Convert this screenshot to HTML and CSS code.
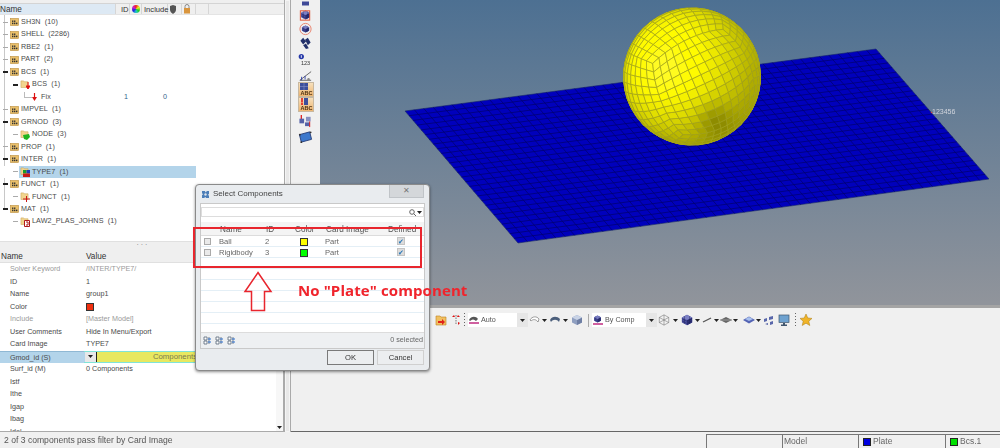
FILE: index.html
```html
<!DOCTYPE html>
<html lang="en">
<head>
<meta charset="utf-8">
<title>Select Components</title>
<link rel="stylesheet" href="styles.css">
</head>
<body>
<svg class="defs" width="0" height="0" aria-hidden="true">
  <defs>
    <symbol id="i-group" viewBox="0 0 9 8"><rect x=".5" y=".5" width="8" height="7" fill="#eac06a" stroke="#b98c3a" stroke-width=".6"/><rect x="2" y="2.5" width="1.4" height="1.4" fill="#333"/><rect x="4" y="2.5" width="1.4" height="1.4" fill="#333"/><rect x="2" y="4.6" width="1.4" height="1.6" fill="#333"/><rect x="4" y="4.6" width="1.4" height="1.6" fill="#333"/><rect x="6" y="4.6" width="1.4" height="1.6" fill="#333"/></symbol>
    <symbol id="i-folder" viewBox="0 0 9 9"><path d="M.5 1h3l1 1h4v6.5H.5z" fill="#f2d58e" stroke="#c9a253" stroke-width=".6"/></symbol>
    <symbol id="i-cube" viewBox="0 0 14 14"><path d="M7 1l6 3v6l-6 3-6-3V4z" fill="#4a4fa0"/><path d="M7 7l6-3v6l-6 3z" fill="#2e3278"/><path d="M7 1l6 3-6 3-6-3z" fill="#7c80c4"/><path d="M1 5.500l6 3 6-3M1 8l6 3 6-3M4 2.500v9M10 2.500v9" fill="none" stroke="#1c1f55" stroke-width=".5"/></symbol>
    <symbol id="i-caret" viewBox="0 0 5 3"><path d="M0 0h5L2.500 3z" fill="#222"/></symbol>
    <symbol id="i-grid" viewBox="0 0 9 9"><path d="M1 1h3v3H1zM1 5h3v3H1z" fill="#fff" stroke="#567" stroke-width=".8"/><path d="M6 1v7" stroke="#567" stroke-width=".8"/><path d="M5 3h3M5 6h3" stroke="#2a6fd0" stroke-width="1"/></symbol>
  </defs>
</svg>

<div class="app">
  <div class="main">
    <aside class="left">
      <div class="strip"></div>
      <div class="thead">
        <span class="th th-name">Name</span>
        <span class="th th-id">ID</span>
        <span class="th th-col"><i class="wheel"></i></span>
        <span class="th th-inc">Include</span>
        <span class="th th-ic"><svg width="8" height="9" viewBox="0 0 8 9"><path d="M1 1l3-1 3 1v4c0 2-2 3-3 4-1-1-3-2-3-4z" fill="#555"/></svg></span>
        <span class="th th-ic"><svg width="8" height="10" viewBox="0 0 8 10"><path d="M2 4V2.500a2 2 0 0 1 4 0V4" fill="none" stroke="#888"/><rect x="1" y="4" width="6" height="5.500" fill="#d9953d"/></svg></span>
        <span class="th th-rest"></span>
      </div>
      <div class="tree">
        <div class="row"><span class="exp"></span><svg class="ic"><use href="#i-group"/></svg><span class="lbl">SH3N  (10)</span></div>
        <div class="row"><span class="exp"></span><svg class="ic"><use href="#i-group"/></svg><span class="lbl">SHELL  (2286)</span></div>
        <div class="row"><span class="exp"></span><svg class="ic"><use href="#i-group"/></svg><span class="lbl">RBE2  (1)</span></div>
        <div class="row"><span class="exp"></span><svg class="ic"><use href="#i-group"/></svg><span class="lbl">PART  (2)</span></div>
        <div class="row"><span class="exp open"></span><svg class="ic"><use href="#i-group"/></svg><span class="lbl">BCS  (1)</span></div>
        <div class="row l1"><span class="exp open"></span><span class="stack"><svg class="ic"><use href="#i-folder"/></svg><svg class="badge" width="4" height="8" viewBox="0 0 4 8"><path d="M2 0v5M0 4l2 3 2-3z" stroke="#d11" fill="#d11"/></svg></span><span class="lbl">BCS  (1)</span></div>
        <div class="row l2"><span class="elbow"></span><svg class="arrow" width="5" height="9" viewBox="0 0 5 9"><path d="M2.500 0v5" stroke="#d11" stroke-width="1.200"/><path d="M0 4l2.500 4L5 4z" fill="#d11"/></svg><span class="lbl lbl-fix">Fix</span><span class="num n-id">1</span><span class="num n-inc">0</span></div>
        <div class="row"><span class="exp"></span><svg class="ic"><use href="#i-group"/></svg><span class="lbl">IMPVEL  (1)</span></div>
        <div class="row"><span class="exp open"></span><svg class="ic"><use href="#i-group"/></svg><span class="lbl">GRNOD  (3)</span></div>
        <div class="row l1"><span class="exp"></span><span class="stack"><svg class="ic"><use href="#i-folder"/></svg><svg class="badge" width="7" height="6" viewBox="0 0 7 6"><path d="M0 1l6-1 1 3-3 3-3-1z" fill="#1fb51f"/></svg></span><span class="lbl">NODE  (3)</span></div>
        <div class="row"><span class="exp"></span><svg class="ic"><use href="#i-group"/></svg><span class="lbl">PROP  (1)</span></div>
        <div class="row"><span class="exp open"></span><svg class="ic"><use href="#i-group"/></svg><span class="lbl">INTER  (1)</span></div>
        <div class="row l1 sel"><span class="exp"></span><span class="stack"><svg class="ic"><use href="#i-folder"/></svg><svg class="badge" width="7" height="7" viewBox="0 0 7 7"><rect width="3.500" height="3.500" fill="#1c9c2a"/><rect x="3.500" width="3.500" height="3.500" fill="#1e3cb4"/><rect y="3.500" width="7" height="3.500" fill="#c81818"/></svg></span><span class="lbl">TYPE7  (1)</span></div>
        <div class="row"><span class="exp open"></span><svg class="ic"><use href="#i-group"/></svg><span class="lbl">FUNCT  (1)</span></div>
        <div class="row l1"><span class="exp"></span><span class="stack"><svg class="ic"><use href="#i-folder"/></svg><svg class="badge" width="7" height="6" viewBox="0 0 7 6"><path d="M3.500 0v6M0 3h7" stroke="#c81818"/></svg></span><span class="lbl">FUNCT  (1)</span></div>
        <div class="row"><span class="exp open"></span><svg class="ic"><use href="#i-group"/></svg><span class="lbl">MAT  (1)</span></div>
        <div class="row l1"><span class="exp"></span><span class="stack"><svg class="ic"><use href="#i-folder"/></svg><svg class="badge" width="6" height="7" viewBox="0 0 6 7"><path d="M.5.500h5v6h-5zM2 2h2v3H2" fill="#fff" stroke="#b01818"/></svg></span><span class="lbl">LAW2_PLAS_JOHNS  (1)</span></div>
      </div>
      <div class="hsplit">· · ·</div>
      <div class="phead"><span>Name</span><span>Value</span></div>
      <div class="props">
        <div class="prow dim"><span>Solver Keyword</span><span>/INTER/TYPE7/</span></div>
        <div class="prow"><span>ID</span><span>1</span></div>
        <div class="prow"><span>Name</span><span>group1</span></div>
        <div class="prow"><span>Color</span><span><i class="swatch swatch-red"></i></span></div>
        <div class="prow dim"><span>Include</span><span>[Master Model]</span></div>
        <div class="prow"><span>User Comments</span><span>Hide In Menu/Export</span></div>
        <div class="prow"><span>Card Image</span><span>TYPE7</span></div>
        <div class="prow active"><span>Gmod_id (S)</span><span class="picker"><i class="pick-btn"><svg width="5" height="3"><use href="#i-caret"/></svg></i><i class="pick-val">Components</i></span></div>
        <div class="prow"><span>Surf_id (M)</span><span>0 Components</span></div>
        <div class="prow"><span>Istf</span><span></span></div>
        <div class="prow"><span>Ithe</span><span></span></div>
        <div class="prow"><span>Igap</span><span></span></div>
        <div class="prow"><span>Ibag</span><span></span></div>
        <div class="prow prow-cut"><span>Idel</span><span></span></div>
        <div class="pscroll"><svg width="5" height="3"><use href="#i-caret"/></svg></div>
      </div>
    </aside>
    <div class="vsplit"></div>
    <div class="rightside">
      <nav class="vbar">
        <svg class="vt h5" viewBox="0 0 15 5"><path d="M4 0h7v4H4z" fill="#3f4a98"/></svg>
        <svg class="vt" viewBox="0 0 15 15"><use href="#i-cube" x="2" y="2" width="11" height="11"/><rect x="2" y="3" width="10" height="10" fill="none" stroke="#e25a3a" stroke-width="1.100"/></svg>
        <svg class="vt" viewBox="0 0 15 15"><use href="#i-cube" x="3" y="3" width="9" height="9"/><circle cx="7.500" cy="7.500" r="6" fill="none" stroke="#e8806a"/></svg>
        <svg class="vt" viewBox="0 0 15 15"><path d="M2 5l3-3 3 4-3 3zM7 4l3-2 3 5-3 3zM5 10l3-2 3 5-3 1z" fill="#22306a"/></svg>
        <svg class="vt h8" viewBox="0 0 15 8"><circle cx="5" cy="4" r="3" fill="#2638a8"/><path d="M5 2.500v3" stroke="#fff"/></svg>
        <span class="vt-num">123</span>
        <svg class="vt vt-ramp" viewBox="0 0 15 15"><path d="M1 13L14 3M1 13h13" stroke="#555" fill="none"/><path d="M3 9v4M7 8v4" stroke="#2638a8"/><circle cx="11" cy="12" r="1.500" fill="#888"/></svg>
        <div class="vt-abc"><svg width="8" height="7" viewBox="0 0 8 7"><rect width="8" height="7" fill="#3c4f9c"/><path d="M0 3.500h8M4 0v7" stroke="#8892c8" stroke-width=".6"/></svg><b>ABC</b></div>
        <div class="vt-abc"><svg width="8" height="7" viewBox="0 0 8 7"><path d="M2 0v4.500" stroke="#d11" stroke-width="1.500"/><circle cx="2" cy="6" r="1" fill="#d11"/><rect x="4" width="4" height="7" fill="#3c4f9c"/></svg><b>ABC</b></div>
        <svg class="vt vt-gap" viewBox="0 0 15 15"><path d="M3 1v5" stroke="#d11" stroke-width="1.300"/><rect x="1" y="5" width="5" height="5" fill="#5562a8"/><rect x="8" y="3" width="5" height="5" fill="#8890c0"/><rect x="7" y="9" width="5" height="4" fill="#5562a8"/><path d="M12 8v6" stroke="#d11"/></svg>
        <svg class="vt vt-gap" viewBox="0 0 15 15"><path d="M1 5l11-3 2 8-11 3z" fill="#3d78cc" stroke="#29407a"/><circle cx="1.500" cy="5" r="1" fill="#333"/><circle cx="13" cy="2.500" r="1" fill="#333"/><circle cx="3" cy="13" r="1" fill="#333"/></svg>
      </nav>
      <section class="work">
        <div class="view">
          <svg class="scene" id="scene" width="680" height="305" viewBox="320 0 680 305">
            <defs><clipPath id="ball"><circle cx="692" cy="76.500" r="69"/></clipPath></defs>
            <polygon points="405,111 876,49 989,179 518,243" fill="#0000bc" stroke="#1a2a66" stroke-width=".6"/>
            <g id="plate-lines" class="plate-lines"></g>
            <g id="ball-cells" clip-path="url(#ball)"></g>
            <circle cx="931.500" cy="112.500" r=".8" fill="#d04040"/>
            <text x="932" y="113.500" class="triad">123456</text>
          </svg>
        </div>
        <div class="tools">
          <svg class="ti m0" viewBox="0 0 12 12"><path d="M1 2h4l1 1h5v8H1z" fill="#f0c060" stroke="#c08020" stroke-width=".6"/><path d="M3 7h4V5l3 3-3 3V9H3z" fill="#e0201a"/></svg>
          <svg class="ti ti-s m5" viewBox="0 0 8 12"><path d="M4 1v10" stroke="#777" stroke-dasharray="1.500 1"/><path d="M0 3l2-2 1 2zM8 3L6 1 5 3z" fill="#d11"/><path d="M6 8l2 1-2 2z" fill="#d11"/></svg>
          <i class="dots m4"></i>
          <div class="combo c-auto m3"><svg class="ci" viewBox="0 0 10 10"><path d="M0 5c2-4 7-4 9-1l-2 2C5 4 3 4 1 6z" fill="#555"/><path d="M0 8h10" stroke="#d060a0" stroke-width="2"/></svg><span>Auto</span></div><span class="cbtn"><svg width="5" height="3"><use href="#i-caret"/></svg></span>
          <svg class="ti m1" viewBox="0 0 12 12"><path d="M1 6c2-4 7-4 9-1l-1 3C7 5 4 5 2 7z" fill="#fff" stroke="#777" stroke-width=".7"/></svg>
          <svg class="car m1"><use href="#i-caret"/></svg>
          <svg class="ti m2" viewBox="0 0 12 12"><path d="M1 6c2-4 7-4 10-1l-1 3C8 5 4 5 2 8z" fill="#4c5f7c"/></svg>
          <svg class="car m2"><use href="#i-caret"/></svg>
          <svg class="ti m3" viewBox="0 0 12 12"><path d="M6 1l5 2.500v5L6 11 1 8.500v-5z" fill="#8f9fc0"/><path d="M6 6l5-2.500v5L6 11z" fill="#6f7fa4"/><path d="M6 1l5 2.500L6 6 1 3.500z" fill="#c9d3e6"/></svg>
          <i class="sep"></i>
          <div class="combo c-comp"><svg class="ci" viewBox="0 0 10 10"><use href="#i-cube" width="9" height="8"/><path d="M0 9h10" stroke="#d060a0" stroke-width="2"/></svg><span>By Comp</span></div><span class="cbtn"><svg width="5" height="3"><use href="#i-caret"/></svg></span>
          <svg class="ti m1" viewBox="0 0 14 14"><path d="M7 1l5.500 3v6L7 13l-5.500-3V4zM7 1v12M1.500 4L12.500 10M12.500 4L1.500 10" fill="#f2f2f2" stroke="#666" stroke-width=".6"/></svg>
          <svg class="car m3"><use href="#i-caret"/></svg>
          <svg class="ti m3"><use href="#i-cube"/></svg>
          <svg class="car m2"><use href="#i-caret"/></svg>
          <svg class="ti-l m2" viewBox="0 0 10 8"><path d="M1 6l8-4" stroke="#555" stroke-width="1.300"/></svg>
          <svg class="car m2"><use href="#i-caret"/></svg>
          <svg class="ti m1" viewBox="0 0 12 12"><path d="M0 6l6-3 6 3-6 3z" fill="#666"/><path d="M0 6h12" stroke="#999"/></svg>
          <svg class="car m1"><use href="#i-caret"/></svg>
          <svg class="ti m5" viewBox="0 0 12 12"><path d="M0 6l6-3.500L12 6 6 9.500z" fill="#5464b4"/><path d="M2 5l4-2 4 2-4 2z" fill="#a8c0ee"/></svg>
          <svg class="car m1"><use href="#i-caret"/></svg>
          <svg class="ti m2" viewBox="0 0 12 12"><path d="M1 5l3-1v3L1 8zM6 3l4-1v3L6 6zM2 10l3-1v2zM7 8l3-1v3l-3 1z" fill="#5866aa"/></svg>
          <svg class="ti m3" viewBox="0 0 12 12"><rect x="1" y="1" width="10" height="7.500" fill="#6ea2d0" stroke="#40566e" stroke-width=".7"/><path d="M5 9h2v1.500h2V12H3v-1.500h2z" fill="#40566e"/></svg>
          <i class="dots m5"></i>
          <svg class="ti m4" viewBox="0 0 12 12"><path d="M6 0l1.800 4 4.200.400-3.200 2.800 1 4.300L6 9.200 2.200 11.500l1-4.300L0 4.400 4.200 4z" fill="#f0b428" stroke="#a87a10" stroke-width=".5"/></svg>
        </div>
      </section>
    </div>
  </div>
  <footer class="status">
    <span class="st-msg">2 of 3 components pass filter by Card Image</span>
    <span class="cell c1"></span>
    <span class="cell c2">Model</span>
    <span class="cell c3"><i class="sq sq-blue"></i>Plate</span>
    <span class="cell c4"><i class="sq sq-green"></i>Bcs.1</span>
  </footer>
</div>

<div class="dialog">
  <div class="dtitle">
    <svg width="9" height="9" viewBox="0 0 9 9"><path d="M1 1h3l.5 1.500L6 1h2v3L7 4.500 8 6v2H5L4.500 7 3 8H1V5l1-.5L1 3z" fill="#4d7fb8"/><circle cx="4.500" cy="4.500" r="1.200" fill="#dfe4e9"/></svg>
    <span>Select Components</span>
    <span class="dclose">✕</span>
  </div>
  <div class="dbody">
    <div class="dsearch"><svg width="7" height="7" viewBox="0 0 7 7"><circle cx="3" cy="3" r="2.300" fill="none" stroke="#666"/><path d="M4.600 4.600L7 7" stroke="#666"/></svg><svg width="5" height="3"><use href="#i-caret"/></svg></div>
    <div class="dhead"><span class="dc-n">Name</span><span class="dc-i">ID</span><span class="dc-c">Color</span><span class="dc-p">Card Image</span><span class="dc-d">Defined</span></div>
    <div class="drow"><i class="cb"></i><span class="dn">Ball</span><span class="di">2</span><i class="swatch-d s-y"></i><span class="dp">Part</span><i class="chk">✔</i></div>
    <div class="drow"><i class="cb"></i><span class="dn">Rigidbody</span><span class="di">3</span><i class="swatch-d s-g"></i><span class="dp">Part</span><i class="chk">✔</i></div>
    <div class="dempty"></div>
    <div class="dfoot">
      <svg width="9" height="9"><use href="#i-grid"/></svg>
      <svg width="9" height="9"><use href="#i-grid"/></svg>
      <svg width="9" height="9"><use href="#i-grid"/></svg>
      <span class="dcount">0 selected</span>
    </div>
  </div>
  <div class="dbtns"><button class="btn btn-ok">OK</button><button class="btn">Cancel</button></div>
</div>

<div class="redbox"></div>
<svg class="redarrow" width="30" height="41" viewBox="0 0 30 41"><path d="M15 1.500L28 20.500H21.500V39.500H8.500V20.500H2z" fill="none" stroke="#e8262e" stroke-width="1.500"/></svg>
<div class="note">No "Plate" component</div>

<script src="mesh.js"></script>
</body>
</html>
```
FILE: styles.css
```css
* { box-sizing: border-box; }
html, body { margin: 0; padding: 0; }
body {
  width: 1000px; height: 448px; overflow: hidden; position: relative;
  background: #f0f0f0; color: #4a4a4a;
  font: 7.2px/12.5px "Liberation Sans", Arial, sans-serif;
}
i { font-style: normal; }
.defs { position: absolute; }
.app { display: flex; flex-direction: column; height: 448px; overflow: hidden; filter: blur(.3px); }
.main { display: flex; height: 432px; flex: none; }

/* left column */
.left { width: 284px; display: flex; flex-direction: column; background: #fff; flex: none; }
.strip { height: 4px; background: #efefef; border-bottom: 1px solid #d4d4d4; flex: none; }
.thead { height: 11px; display: flex; flex: none; background: #efefef; line-height: 11px; color: #333; border-bottom: 1px solid #e4e4e4; font-size: 7.6px; }
.th { border-right: 1px solid #d6d6d6; display: flex; align-items: center; }
.th-name { width: 116px; background: #dde9f4; font-size: 8.2px; }
.th-id { width: 14px; padding-left: 5px; }
.th-col { width: 12px; justify-content: center; }
.th-inc { width: 26px; padding-left: 2px; }
.th-ic { width: 14px; padding-left: 1px; }
.th-rest { flex: 0 0 13px; }
.wheel { width: 8px; height: 8px; border-radius: 50%; background: conic-gradient(#e22, #ee2, #2c2, #2cc, #22d, #c2c, #e22); }

.tree {
  height: 226px; flex: none; padding-top: 1px;
  background: linear-gradient(#c8c8c8, #c8c8c8) 4px 0 / 1px 194px no-repeat;
}
.row { height: 12.47px; display: flex; align-items: center; position: relative; width: 196px; }
.exp { width: 5px; height: 1px; margin-left: 3px; margin-right: 2px; background: #aaa; flex: none; }
.exp.open { background: #222; height: 2px; }
.ic { width: 9px; height: 8px; flex: none; }
.lbl { margin-left: 2px; letter-spacing: .1px; white-space: pre; }
.l1 { padding-left: 10px; }
.l1 .lbl { margin-left: 1px; }
.stack { position: relative; width: 11px; height: 9px; display: flex; flex: none; }
.badge { position: absolute; right: 1px; bottom: -1px; }
.l2 { padding-left: 24px; }
.elbow { width: 8px; height: 6px; border-left: 1px solid #bbb; border-bottom: 1px solid #bbb; margin-top: -5px; flex: none; }
.arrow { flex: none; margin-left: 0; }
.lbl-fix { margin-left: 4px; }
.num { position: absolute; color: #35648c; }
.n-id { left: 124px; }
.n-inc { left: 163px; }
.sel { background: linear-gradient(90deg, #fff 19px, #b3d4ea 19px); }

.hsplit { height: 9px; flex: none; background: #efefef; border-top: 1px solid #e0e0e0; text-align: center; font-size: 7px; line-height: 6px; color: #777; }
.phead { height: 13px; flex: none; display: grid; grid-template-columns: 85px 1fr; background: #efefef; color: #333; line-height: 14px; border-bottom: 1px solid #e0e0e0; font-size: 8.2px; }
.phead span { padding-left: 1px; }
.props { height: 169px; flex: none; position: relative; overflow: hidden; border-right: 1px solid #aaa; border-bottom: 1px solid #aaa; }
.prow { height: 12.5px; display: grid; grid-template-columns: 85px 1fr; align-items: center; width: 277px; }
.prow > span:first-child { padding-left: 10px; }
.prow > span:last-child { padding-left: 1px; }
.prow-cut { height: 6px; overflow: hidden; align-items: start; }
.dim { color: #9a9a9a; }
.swatch { display: block; width: 8px; height: 8px; }
.swatch-red { background: #f03010; border: 1px solid #333; }
.active > span:first-child { background: #b3d4ea; height: 12px; border-top: 1px solid #8fb8d4; line-height: 11px; }
.prow > .picker { padding: 0; display: flex; height: 12.5px; border-top: 1px solid #7fe4d8; border-bottom: 1px solid #7fe4d8; margin-left: -1px; }
.pick-btn { width: 12px; background: #e8e8e8; display: flex; align-items: center; justify-content: center; border-right: 1px solid #222; }
.pick-val { flex: 1; background: #e8e860; text-align: center; line-height: 10px; color: #7a7a50; padding-right: 24px; font-size: 7.8px; }
.pscroll { position: absolute; right: 0; top: 0; bottom: 0; width: 7px; background: #f7f7f7; display: flex; align-items: flex-end; justify-content: center; padding-bottom: 2px; }

.vsplit { width: 7px; background: #e8e8e8; border-left: 1px solid #aaa; border-right: 1px solid #aaa; box-shadow: inset 0 0 0 1px #f4f4f4; flex: none; }

/* right side */
.rightside { display: flex; flex: 1; border-bottom: 1px solid #666; }

/* vertical toolbar */
.vbar { width: 29px; flex: none; display: flex; flex-direction: column; align-items: center; background: #f0f0f0; padding-left: 0; }
.vt { width: 15px; height: 14px; display: block; flex: none; }
.vt-gap { margin-top: 2px; }
.vt-ramp { margin-top: 2px; height: 13px; }
.h5 { height: 8px; }
.h8 { height: 7px; align-self: flex-start; margin: 3px 0 0 5px; }
.vt-num { font-size: 5.5px; line-height: 7px; height: 7px; color: #333; flex: none; }
.vt-abc { width: 16px; height: 15px; background: linear-gradient(#f7e0bc, #eeb570); border: 1px solid #c8b8a0; display: flex; flex-direction: column; padding-left: 1px; line-height: 6px; flex: none; }
.vt-abc b { font-size: 5.5px; color: #4b2f10; align-self: flex-end; }

/* workspace */
.work { width: 680px; flex: none; display: flex; flex-direction: column; }
.view { height: 308px; flex: none; background: linear-gradient(#4d7092, #90949b 99%); border-bottom: 3px solid #a4a4a4; }
.scene { display: block; }
.plate-lines { stroke: #00006c; stroke-width: .7; fill: none; }
.triad { font: 7px "Liberation Sans", Arial, sans-serif; fill: #d0d4dc; }
.tools { height: 24px; flex: none; display: flex; align-items: center; padding-left: 115px; }
.ti { width: 12px; height: 12px; flex: none; }
.ti-s { width: 8px; }
.ti-l { width: 10px; height: 8px; flex: none; }
.car { width: 5px; height: 3px; flex: none; }
.m0 { margin-left: 0; } .m1 { margin-left: 1px; } .m2 { margin-left: 2px; } .m3 { margin-left: 3px; } .m4 { margin-left: 4px; } .m5 { margin-left: 5px; }
.dots { width: 1px; height: 14px; flex: none; background: repeating-linear-gradient(#666 0 1px, transparent 1px 3px); }
.combo { height: 14px; background: #fff; display: flex; align-items: center; gap: 2px; padding-left: 1px; flex: none; color: #555; }
.ci { width: 10px; height: 10px; flex: none; }
.c-auto { width: 49px; }
.c-comp { width: 54px; }
.cbtn { width: 11px; height: 14px; background: #e6e6e6; display: flex; align-items: center; justify-content: center; flex: none; }
.sep { width: 1px; height: 13px; background: #aaa; margin: 0 3px 0 5px; flex: none; }

/* status bar */
.status { height: 16px; flex: none; display: flex; align-items: flex-end; position: relative; font-size: 8.5px; }
.st-msg { position: absolute; left: 4px; top: 2px; font-size: 8.6px; color: #555; }
.cell { height: 14px; border-left: 1px solid #777; border-top: 1px solid #777; display: flex; align-items: center; flex: none; color: #666; padding-left: 1px; }
.c1 { margin-left: 706px; width: 76px; }
.c2 { width: 76px; }
.c3 { width: 87px; }
.c4 { width: 55px; }
.sq { width: 8px; height: 8px; margin: 0 2px 0 3px; border: 1px solid #222; }
.sq-blue { background: #0000e0; }
.sq-green { background: #00e000; }

/* dialog */
.dialog {
  position: absolute; left: 195px; top: 184px; width: 235px; height: 187px;
  background: #e9ecef; border-radius: 4px; border: 1px solid #8a8a8a;
  box-shadow: 0 1px 3px rgba(0,0,0,.45); padding: 0 4px 4px; display: flex; flex-direction: column;
  filter: blur(.3px); font-size: 7.6px;
}
.dtitle { height: 18px; flex: none; display: flex; align-items: center; gap: 3px; padding-left: 1px; color: #444; position: relative; font-size: 8px; }
.dclose { position: absolute; right: 1px; top: 0; width: 35px; height: 13px; background: #d4d7da; border: 1px solid #c0c4c8; border-top: 0; text-align: center; line-height: 12px; color: #777; }
.dbody { height: 146px; flex: none; background: #fff; border: 1px solid #c9c9c9; display: flex; flex-direction: column; }
.dsearch { height: 10px; margin: 3px 0 0; border: 1px solid #ddd; display: flex; align-items: center; justify-content: flex-end; gap: 1px; padding-right: 1px; flex: none; }
.dhead { position: relative; height: 14px; margin-top: 5px; background: #f4f4f4; flex: none; color: #555; border-bottom: 1px solid #dcdcdc; line-height: 15px; font-size: 8.2px; }
.dhead span { position: absolute; top: 0; }
.dc-n { left: 19px; } .dc-i { left: 65px; } .dc-c { left: 94px; } .dc-p { left: 125px; } .dc-d { left: 187px; }
.drow { height: 11px; position: relative; border-bottom: 1px solid #e4eff6; flex: none; color: #666; line-height: 11px; }
.drow > * { position: absolute; }
.cb { left: 3px; top: 2px; width: 7px; height: 7px; background: #eaeaea; border: 1px solid #aaa; }
.dn { left: 18px; } .di { left: 64px; } .dp { left: 124px; }
.swatch-d { left: 99px; top: 1.500px; width: 8px; height: 8px; border: 1px solid #333; }
.s-y { background: #ffff00; }
.s-g { background: #00ff00; }
.chk { left: 196px; top: 1px; width: 8px; height: 8px; background: #dcdcdc; border: 1px solid #c4c4c4; color: #2a78b8; font-size: 7px; line-height: 7px; text-align: center; }
.dempty { flex: 1; background: repeating-linear-gradient(#fff 0 10px, #e4eff6 10px 11px); }
.dfoot { height: 16px; flex: none; display: flex; align-items: center; gap: 3px; padding: 0 1px 0 2px; background: #eef0f2; border-top: 1px solid #dcdcdc; }
.dcount { margin-left: auto; color: #666; font-size: 7.2px; }
.dbtns { flex: 1; display: flex; justify-content: flex-end; gap: 3px; padding-top: 1px; padding-right: 1px; }
.btn { width: 47px; height: 15px; padding: 0; font: inherit; line-height: 12px; color: #333; background: #eceef0; border: 1px solid #d0d0d0; }
.btn-ok { border: 1px solid #7a7a7a; }

/* annotations */
.redbox { position: absolute; left: 193px; top: 227px; width: 229px; height: 41px; border: 2px solid #e8262e; }
.redarrow { position: absolute; left: 243px; top: 271px; }
.note { position: absolute; left: 298px; top: 280px; font: bold 15px/20px "Open Sans", sans-serif; letter-spacing: .1px; color: #f0242c; white-space: nowrap; }
```
FILE: mesh.js
```js
(function () {
  var NS = 'http://www.w3.org/2000/svg';

  // plate grid: bilinear over the four projected corners
  var A = [405, 111], B = [876, 49], C = [989, 179], D = [518, 243];
  var NU = 50, NV = 28, d = '';
  function lerp(p, q, t) { return [p[0] + (q[0] - p[0]) * t, p[1] + (q[1] - p[1]) * t]; }
  function seg(p, q) { return 'M' + p[0].toFixed(1) + ' ' + p[1].toFixed(1) + 'L' + q[0].toFixed(1) + ' ' + q[1].toFixed(1); }
  for (var i = 1; i < NU; i++) { d += seg(lerp(A, B, i / NU), lerp(D, C, i / NU)); }
  for (var j = 1; j < NV; j++) { d += seg(lerp(A, D, j / NV), lerp(B, C, j / NV)); }
  var lines = document.createElementNS(NS, 'path');
  lines.setAttribute('d', d);
  document.getElementById('plate-lines').appendChild(lines);

  // cube-sphere mesh, flat shaded
  function norm(v) { var l = Math.hypot(v[0], v[1], v[2]); return [v[0] / l, v[1] / l, v[2] / l]; }
  function dot(a, b) { return a[0] * b[0] + a[1] * b[1] + a[2] * b[2]; }
  function cross(a, b) { return [a[1] * b[2] - a[2] * b[1], a[2] * b[0] - a[0] * b[2], a[0] * b[1] - a[1] * b[0]]; }

  var a3 = norm([1, 1, 1]), a1 = norm([1, -1, 0]), a2 = norm([1, 1, -2]);
  var b3 = norm([-0.57, -0.19, 0.8]);
  var up = [0.25, 1, 0], k = dot(up, b3);
  var b2 = norm([up[0] - k * b3[0], up[1] - k * b3[1], up[2] - k * b3[2]]);
  var b1 = cross(b2, b3);
  function rot(v) {
    var x = dot(v, a1), y = dot(v, a2), z = dot(v, a3);
    return [x * b1[0] + y * b2[0] + z * b3[0], x * b1[1] + y * b2[1] + z * b3[1], x * b1[2] + y * b2[2] + z * b3[2]];
  }

  var CX = 692, CY = 76.5, R = 69, N = 11;
  var L = norm([-0.42, -0.12, 0.9]);
  var faces = [
    [[1, 0, 0], [0, 1, 0], [0, 0, 1]], [[-1, 0, 0], [0, 1, 0], [0, 0, 1]],
    [[0, 1, 0], [1, 0, 0], [0, 0, 1]], [[0, -1, 0], [1, 0, 0], [0, 0, 1]],
    [[0, 0, 1], [1, 0, 0], [0, 1, 0]], [[0, 0, -1], [1, 0, 0], [0, 1, 0]]
  ];
  function pt(f, s, t) {
    var u = Math.tan((s / N - 0.5) * Math.PI / 2), v = Math.tan((t / N - 0.5) * Math.PI / 2);
    return rot(norm([f[0][0] + u * f[1][0] + v * f[2][0], f[0][1] + u * f[1][1] + v * f[2][1], f[0][2] + u * f[1][2] + v * f[2][2]]));
  }
  var cells = [];
  faces.forEach(function (f) {
    for (var s = 0; s < N; s++) {
      for (var t = 0; t < N; t++) {
        var q = [pt(f, s, t), pt(f, s + 1, t), pt(f, s + 1, t + 1), pt(f, s, t + 1)];
        var n = norm([q[0][0] + q[1][0] + q[2][0] + q[3][0], q[0][1] + q[1][1] + q[2][1] + q[3][1], q[0][2] + q[1][2] + q[2][2] + q[3][2]]);
        if (n[2] < -0.1) { continue; }
        cells.push({ q: q, n: n });
      }
    }
  });
  cells.sort(function (p, q) { return p.n[2] - q.n[2]; });
  var group = document.getElementById('ball-cells');
  cells.forEach(function (c) {
    var n = c.n, i = Math.max(0, dot(n, L));
    var dx = n[0] - 0.32, dy = n[1] - 0.62;
    var dark = 0.18 * Math.exp(-(dx * dx + dy * dy) / 0.06);
    var v = 0.74 + 0.32 * Math.pow(i, 1.6) - 0.1 * Math.max(0, n[1]) - 0.05 * Math.max(0, n[0]) - dark + 0.06 * Math.max(0, -n[1]);
    v = Math.min(1, v);
    var rg = Math.round(255 * v), b = Math.round(Math.max(0, i - 0.92) * 500);
    var p = document.createElementNS(NS, 'polygon');
    p.setAttribute('points', c.q.map(function (w) {
      return (CX + w[0] * R).toFixed(1) + ',' + (CY + w[1] * R).toFixed(1);
    }).join(' '));
    p.setAttribute('fill', 'rgb(' + rg + ',' + Math.round(rg * 0.985) + ',' + b + ')');
    p.setAttribute('stroke', '#a8a818');
    p.setAttribute('stroke-width', '0.7');
    group.appendChild(p);
  });
})();
```
